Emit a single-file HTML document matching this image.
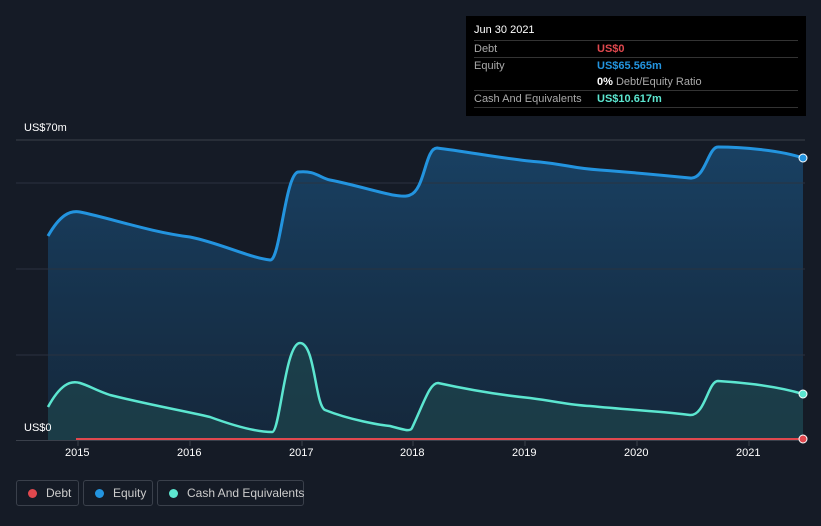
<!DOCTYPE html><html><head><style>
html,body{margin:0;width:821px;height:526px;overflow:hidden}
body{background:#151b26;font-family:"Liberation Sans",sans-serif;position:relative}
.t{position:absolute;font-size:11px;color:#fff}
.tip{position:absolute;left:466px;top:16px;width:340px;height:100px;background:#000}
.row{position:absolute;left:8px;width:324px;border-top:1px solid #333;font-size:11px;color:#aaa}
.leg{position:absolute;top:480px;height:26px;border:1px solid #3a404b;border-radius:3px;color:#ccc;font-size:12px;line-height:24px;box-sizing:border-box;white-space:nowrap}
.leg i{display:inline-block;width:9px;height:9px;border-radius:50%;margin:0 9px 0 11px;vertical-align:-1px}
</style></head><body>
<svg width="821" height="526" style="position:absolute;left:0;top:0">
<defs><linearGradient id="g" x1="0" y1="0" x2="0" y2="1"><stop offset="0" stop-color="#1a4a72" stop-opacity=".8"/><stop offset="1" stop-color="#14304a" stop-opacity=".6"/></linearGradient></defs>
<line x1="16" y1="140" x2="805" y2="140" stroke="#3a404b"/>
<path d="M48,236 C60,215 70,210 80,212 C110,218 150,232 190,237 C220,243 250,258 270,260 C280,262 285,175 298,172 C315,170 320,178 330,180 C370,188 400,200 410,195 C425,190 425,148 437,148 C470,152 510,160 540,162 C570,165 570,168 600,170 C640,173 670,176 690,178 C705,180 708,147 718,147 C740,147 780,150 803,158 L803,440 L48,440Z" fill="url(#g)"/>
<line x1="16" y1="183" x2="805" y2="183" stroke="#2a3240"/><line x1="16" y1="269" x2="805" y2="269" stroke="#2a3240"/><line x1="16" y1="355" x2="805" y2="355" stroke="#2a3240"/>
<path d="M48,407 C60,385 70,380 80,383 C90,386 95,390 110,395 C150,405 180,410 210,417 C240,428 260,432 272,432 C280,433 285,343 300,343 C315,343 315,405 325,410 C350,420 380,425 390,426 C405,430 410,432 412,428 C425,400 430,383 438,383 C470,390 500,395 530,398 C560,402 570,405 590,406 C630,410 670,412 690,415 C705,416 708,381 718,381 C750,383 780,387 803,394 L803,440 L48,440Z" fill="#1f4a4e" fill-opacity=".6"/>
<path d="M48,236 C60,215 70,210 80,212 C110,218 150,232 190,237 C220,243 250,258 270,260 C280,262 285,175 298,172 C315,170 320,178 330,180 C370,188 400,200 410,195 C425,190 425,148 437,148 C470,152 510,160 540,162 C570,165 570,168 600,170 C640,173 670,176 690,178 C705,180 708,147 718,147 C740,147 780,150 803,158" fill="none" stroke="#2394df" stroke-width="3"/>
<path d="M48,407 C60,385 70,380 80,383 C90,386 95,390 110,395 C150,405 180,410 210,417 C240,428 260,432 272,432 C280,433 285,343 300,343 C315,343 315,405 325,410 C350,420 380,425 390,426 C405,430 410,432 412,428 C425,400 430,383 438,383 C470,390 500,395 530,398 C560,402 570,405 590,406 C630,410 670,412 690,415 C705,416 708,381 718,381 C750,383 780,387 803,394" fill="none" stroke="#5ce6d0" stroke-width="2.5"/>
<line x1="16" y1="440.5" x2="805" y2="440.5" stroke="#3a404b"/>
<line x1="76" y1="439" x2="803" y2="439" stroke="#e0484e" stroke-width="2"/>
<circle cx="803" cy="158" r="4" fill="#2394df" stroke="#fff" stroke-width="1"/>
<circle cx="803" cy="394" r="4" fill="#5ce6d0" stroke="#fff" stroke-width="1"/>
<circle cx="803" cy="439" r="4" fill="#e0484e" stroke="#fff" stroke-width="1"/>
<g stroke="#3a404b"><line x1="78" y1="441" x2="78" y2="446"/><line x1="190" y1="441" x2="190" y2="446"/><line x1="302" y1="441" x2="302" y2="446"/><line x1="413" y1="441" x2="413" y2="446"/><line x1="525" y1="441" x2="525" y2="446"/><line x1="637" y1="441" x2="637" y2="446"/><line x1="749" y1="441" x2="749" y2="446"/></g>
</svg>
<div class="t" style="left:24px;top:122px">US$70m</div>
<div class="t" style="left:24px;top:422px">US$0</div>
<div class="t" style="left:65px;top:447px">2015</div><div class="t" style="left:177px;top:447px">2016</div><div class="t" style="left:289px;top:447px">2017</div><div class="t" style="left:400px;top:447px">2018</div><div class="t" style="left:512px;top:447px">2019</div><div class="t" style="left:624px;top:447px">2020</div><div class="t" style="left:736px;top:447px">2021</div>
<div class="tip">
<div style="position:absolute;left:8px;top:8px;color:#fff;font-size:11px">Jun 30 2021</div>
<div class="row" style="top:24px;height:16px;line-height:16px">Debt<span style="position:absolute;left:123px;color:#e0484e;font-weight:bold">US$0</span></div>
<div class="row" style="top:41px;height:32px;line-height:16px">Equity<span style="position:absolute;left:123px;color:#2394df;font-weight:bold">US$65.565m</span><span style="position:absolute;left:123px;top:16px"><b style="color:#fff">0%</b> Debt/Equity Ratio</span></div>
<div class="row" style="top:74px;height:16px;line-height:16px;border-bottom:1px solid #333">Cash And Equivalents<span style="position:absolute;left:123px;color:#5ce6d0;font-weight:bold">US$10.617m</span></div>
</div>
<div class="leg" style="left:16px;width:63px"><i style="background:#e0484e"></i>Debt</div>
<div class="leg" style="left:83px;width:70px"><i style="background:#2394df"></i>Equity</div>
<div class="leg" style="left:157px;width:147px"><i style="background:#5ce6d0"></i>Cash And Equivalents</div>
</body></html>
